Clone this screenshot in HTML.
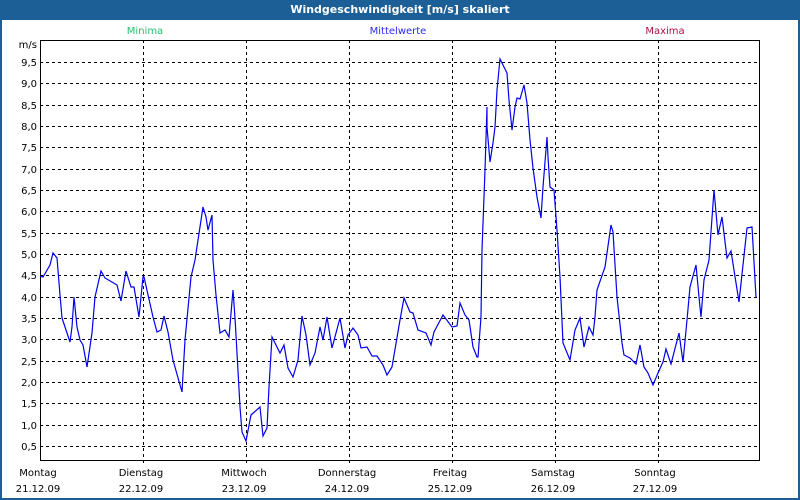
<!DOCTYPE html>
<html><head><meta charset="utf-8"><style>
body{margin:0;width:800px;height:500px;overflow:hidden;background:#fff;font-family:"DejaVu Sans","Liberation Sans",sans-serif;}
#f{position:absolute;left:0;top:0;width:796px;height:478px;border:2px solid #1c5f96;border-top:20px solid #1c5f96;}
#t{position:absolute;left:0;top:0;width:800px;height:20px;line-height:20px;text-align:center;color:#fff;font-size:11px;font-weight:bold;}
svg{position:absolute;left:0;top:0}
svg text{font-family:"DejaVu Sans","Liberation Sans",sans-serif;font-size:10px}
</style></head><body>
<div id="f"></div><div id="t">Windgeschwindigkeit [m/s] skaliert</div>
<svg width="800" height="500">
<g stroke="#000" stroke-dasharray="3,3" stroke-width="1">
<line x1="40" x2="760" y1="62.5" y2="62.5"/><line x1="40" x2="760" y1="83.5" y2="83.5"/><line x1="40" x2="760" y1="105.5" y2="105.5"/><line x1="40" x2="760" y1="126.5" y2="126.5"/><line x1="40" x2="760" y1="147.5" y2="147.5"/><line x1="40" x2="760" y1="169.5" y2="169.5"/><line x1="40" x2="760" y1="190.5" y2="190.5"/><line x1="40" x2="760" y1="211.5" y2="211.5"/><line x1="40" x2="760" y1="233.5" y2="233.5"/><line x1="40" x2="760" y1="254.5" y2="254.5"/><line x1="40" x2="760" y1="275.5" y2="275.5"/><line x1="40" x2="760" y1="297.5" y2="297.5"/><line x1="40" x2="760" y1="318.5" y2="318.5"/><line x1="40" x2="760" y1="339.5" y2="339.5"/><line x1="40" x2="760" y1="361.5" y2="361.5"/><line x1="40" x2="760" y1="382.5" y2="382.5"/><line x1="40" x2="760" y1="403.5" y2="403.5"/><line x1="40" x2="760" y1="425.5" y2="425.5"/><line x1="40" x2="760" y1="446.5" y2="446.5"/>
<line x1="143.5" x2="143.5" y1="40" y2="466"/><line x1="246.5" x2="246.5" y1="40" y2="466"/><line x1="349.5" x2="349.5" y1="40" y2="466"/><line x1="452.5" x2="452.5" y1="40" y2="466"/><line x1="555.5" x2="555.5" y1="40" y2="466"/><line x1="658.5" x2="658.5" y1="40" y2="466"/>
</g>
<rect x="40.5" y="40.5" width="719" height="420" fill="none" stroke="#000"/>
<polyline fill="none" stroke="#0000ee" stroke-width="1.2" points="40,276 43,277 50,265 53,253 57,258 60,295 62,318 67,333 70,342 72,327 74,297 77,327 80,340 83,345 87,367 92,333 95,297 101,271 105,278 117,285 121,301 126,271 131,287 134,287 139,317 143,277 144,277 153,317 157,332 161,330 164,316 168,332 173,360 182,392 185,340 191,277 195,260 203,207 206,217 208,230 212,215 213,260 216,295 220,333 225,330 229,337 233,290 235,318 237,353 240,407 242,432 246,441 251,415 260,407 263,436 267,428 269,387 272,337 280,353 284,345 288,368 293,377 298,360 302,316 306,335 310,365 315,353 320,327 323,340 327,317 332,348 340,318 345,348 348,335 353,328 358,335 361,348 367,347 372,356 377,356 383,365 387,375 392,367 400,320 404,298 410,312 413,313 418,330 426,333 431,345 434,332 443,315 452,327 457,326 460,303 465,315 469,320 473,347 477,357 478,357 481,317 482,250 485,170 487,107 487,127 490,162 493,143 495,127 497,90 500,59 503,65 507,73 509,100 512,130 515,107 517,98 520,99 524,85 527,103 530,140 533,168 537,197 541,218 543,187 547,137 548,157 550,187 554,190 557,230 560,277 563,343 570,360 575,330 580,318 584,347 589,327 593,335 595,317 597,290 605,267 611,225 613,232 617,297 622,343 624,355 630,358 636,364 640,345 644,367 648,373 653,385 658,373 663,362 666,349 671,364 679,333 683,362 687,320 690,287 696,265 699,297 701,317 704,280 709,260 714,190 718,235 722,217 727,258 731,251 739,302 747,228 752,227 756,297"/>
<g text-anchor="end" fill="#000">
<text x="37" y="48">m/s</text>
<text x="37" y="66">9,5</text><text x="37" y="87">9,0</text><text x="37" y="109">8,5</text><text x="37" y="130">8,0</text><text x="37" y="151">7,5</text><text x="37" y="173">7,0</text><text x="37" y="194">6,5</text><text x="37" y="215">6,0</text><text x="37" y="237">5,5</text><text x="37" y="258">5,0</text><text x="37" y="279">4,5</text><text x="37" y="301">4,0</text><text x="37" y="322">3,5</text><text x="37" y="343">3,0</text><text x="37" y="365">2,5</text><text x="37" y="386">2,0</text><text x="37" y="407">1,5</text><text x="37" y="429">1,0</text><text x="37" y="450">0,5</text>
</g>
<g text-anchor="middle">
<text x="145" y="34" fill="#22c070">Minima</text>
<text x="398" y="34" fill="#2a2af0">Mittelwerte</text>
<text x="665" y="34" fill="#b01040">Maxima</text>
<g fill="#000">
<text x="38" y="476">Montag</text><text x="38" y="492">21.12.09</text>
<text x="141" y="476">Dienstag</text><text x="141" y="492">22.12.09</text>
<text x="244" y="476">Mittwoch</text><text x="244" y="492">23.12.09</text>
<text x="347" y="476">Donnerstag</text><text x="347" y="492">24.12.09</text>
<text x="450" y="476">Freitag</text><text x="450" y="492">25.12.09</text>
<text x="553" y="476">Samstag</text><text x="553" y="492">26.12.09</text>
<text x="655" y="476">Sonntag</text><text x="655" y="492">27.12.09</text>
</g></g>
</svg>
</body></html>
